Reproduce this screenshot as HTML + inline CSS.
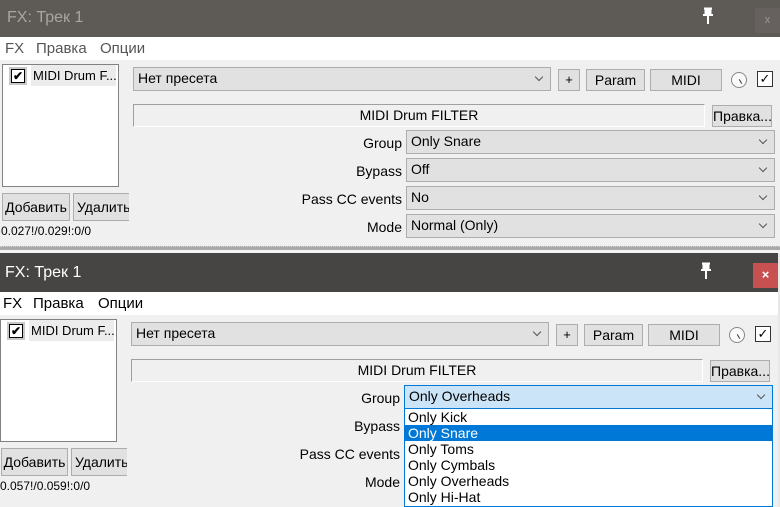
<!DOCTYPE html><html><head><meta charset="utf-8"><style>
*{box-sizing:border-box;margin:0;padding:0}
body{width:780px;height:507px;overflow:hidden;background:#f0f0f0;font-family:"Liberation Sans",sans-serif;font-size:13px;color:#000;position:relative}
.a{position:absolute;white-space:nowrap}
.btn{position:absolute;background:#e1e1e1;border:1px solid #adadad;text-align:center;line-height:20px;white-space:nowrap}
.cb{position:absolute;background:#e1e1e1;border:1px solid #adadad;padding-left:4px;line-height:21px;white-space:nowrap}
.cb:after{content:"";position:absolute;right:8px;top:6px;width:5px;height:5px;border-right:1px solid #555;border-bottom:1px solid #555;transform:rotate(45deg)}
.lbl{position:absolute;text-align:right;width:200px}
.menu{position:absolute;font-size:15px;color:#000;white-space:nowrap}
.menu span{position:absolute}
</style></head><body>
<!-- top window -->
<div class="a" style="left:0;top:0;width:780px;height:37px;background:#5e5a56"></div>
<div class="a" style="left:7px;top:9px;color:#a8a5a2;font-size:16px">FX: Трек 1</div>
<svg class="a" style="left:700px;top:7px" width="16" height="18"><path d="M4 1.5h8M5.5 1.5v6M10.5 1.5v6M3 8h10M8 8v9" stroke="#fff" stroke-width="2" fill="none"/><rect x="5" y="2" width="6" height="6" fill="#fff"/></svg>
<div class="a" style="left:755px;top:8px;width:25px;height:25px;background:#66615e;color:#9a9794;text-align:center;line-height:24px;font-size:11px">x</div>
<div class="a" style="left:0;top:37px;width:780px;height:23px;background:#fff"></div>
<div class="menu" style="left:0;top:40px;color:#555"><span style="left:5px">FX</span><span style="left:36px">Правка</span><span style="left:100px">Опции</span></div>
<div class="a" style="left:2px;top:64px;width:117px;height:123px;background:#fff;border:1px solid #828282"></div>
<div class="a" style="left:9px;top:67px;width:18px;height:18px;background:#c8c8c8"></div>
<div class="a" style="left:11px;top:69px;width:14px;height:14px;background:#fff;border:1px solid #000;font-size:12px;line-height:12px;text-align:center;font-weight:bold">✔</div>
<div class="a" style="left:31px;top:65px;width:85px;height:21px;background:#ececec;line-height:21px;padding-left:2px;overflow:hidden">MIDI Drum F...</div>
<div class="btn" style="left:2px;top:193px;width:68px;height:28px;line-height:26px;font-size:14px">Добавить</div>
<div class="btn" style="left:73px;top:193px;width:56px;height:28px;line-height:26px;overflow:hidden;text-align:left;padding-left:3px;border-right:none;font-size:14px">Удалить</div>
<div class="a" style="left:1px;top:224px;font-size:12px">0.027!/0.029!:0/0</div>
<div class="cb" style="left:133px;top:67px;width:418px;height:24px;font-size:14px">Нет пресета</div>
<div class="btn" style="left:558px;top:69px;width:22px;height:22px">+</div>
<div class="btn" style="left:586px;top:69px;width:59px;height:22px;font-size:14px">Param</div>
<div class="btn" style="left:650px;top:69px;width:72px;height:22px;font-size:14px">MIDI</div>
<div class="a" style="left:731px;top:72px;width:16px;height:16px;border-radius:50%;border:1px solid #888;background:#fafafa"></div>
<div class="a" style="left:740px;top:79px;width:1px;height:5px;background:#333;transform:rotate(-30deg)"></div>
<div class="a" style="left:757px;top:71px;width:16px;height:16px;border:1px solid #333;background:#fff;font-size:13px;line-height:14px;text-align:center">✓</div>
<div class="a" style="left:133px;top:104px;width:572px;height:23px;border:1px solid #a0a0a0;border-right-color:#fff;border-bottom-color:#fff;text-align:center;line-height:21px;font-size:14px">MIDI Drum FILTER</div>
<div class="btn" style="left:712px;top:105px;width:60px;height:22px;font-size:14px">Правка...</div>
<div class="lbl" style="left:202px;top:135px;font-size:14px">Group</div>
<div class="cb" style="left:406px;top:130px;width:369px;height:24px;font-size:14px">Only Snare</div>
<div class="lbl" style="left:202px;top:163px;font-size:14px">Bypass</div>
<div class="cb" style="left:406px;top:158px;width:369px;height:24px;font-size:14px">Off</div>
<div class="lbl" style="left:202px;top:191px;font-size:14px">Pass CC events</div>
<div class="cb" style="left:406px;top:186px;width:369px;height:24px;font-size:14px">No</div>
<div class="lbl" style="left:202px;top:219px;font-size:14px">Mode</div>
<div class="cb" style="left:406px;top:214px;width:369px;height:24px;font-size:14px">Normal (Only)</div>
<!-- separator -->
<div class="a" style="left:0;top:246px;width:780px;height:4px;background:#a9a9a9;border-top:1px dotted #d0d0d0"></div>
<div class="a" style="left:0;top:250px;width:780px;height:3px;background:#f4f4f4"></div>
<!-- bottom window -->
<div class="a" style="left:0;top:253px;width:780px;height:39px;background:#474544"></div>
<div class="a" style="left:5px;top:264px;color:#fff;font-size:16px">FX: Трек 1</div>
<svg class="a" style="left:698px;top:262px" width="16" height="18"><path d="M4 1.5h8M5.5 1.5v6M10.5 1.5v6M3 8h10M8 8v9" stroke="#fff" stroke-width="2" fill="none"/><rect x="5" y="2" width="6" height="6" fill="#fff"/></svg>
<div class="a" style="left:753px;top:263px;width:25px;height:25px;background:#c75050;color:#fff;text-align:center;line-height:24px;font-size:13px;font-weight:bold">×</div>
<div class="a" style="left:0;top:292px;width:778px;height:23px;background:#fff"></div>
<div class="a" style="left:778px;top:253px;width:2px;height:254px;background:#e8e8e8"></div>
<div class="menu" style="left:0;top:295px"><span style="left:3px">FX</span><span style="left:33px">Правка</span><span style="left:98px">Опции</span></div>
<div class="a" style="left:0;top:319px;width:117px;height:123px;background:#fff;border:1px solid #828282"></div>
<div class="a" style="left:7px;top:322px;width:18px;height:18px;background:#c8c8c8"></div>
<div class="a" style="left:9px;top:324px;width:14px;height:14px;background:#fff;border:1px solid #000;font-size:12px;line-height:12px;text-align:center;font-weight:bold">✔</div>
<div class="a" style="left:29px;top:320px;width:85px;height:21px;background:#ececec;line-height:21px;padding-left:2px;overflow:hidden">MIDI Drum F...</div>
<div class="btn" style="left:1px;top:448px;width:67px;height:28px;line-height:26px;font-size:14px">Добавить</div>
<div class="btn" style="left:71px;top:448px;width:56px;height:28px;line-height:26px;overflow:hidden;text-align:left;padding-left:3px;border-right:none;font-size:14px">Удалить</div>
<div class="a" style="left:0;top:479px;font-size:12px">0.057!/0.059!:0/0</div>
<div class="cb" style="left:131px;top:322px;width:418px;height:24px;font-size:14px">Нет пресета</div>
<div class="btn" style="left:556px;top:324px;width:22px;height:22px">+</div>
<div class="btn" style="left:584px;top:324px;width:59px;height:22px;font-size:14px">Param</div>
<div class="btn" style="left:648px;top:324px;width:72px;height:22px;font-size:14px">MIDI</div>
<div class="a" style="left:729px;top:327px;width:16px;height:16px;border-radius:50%;border:1px solid #888;background:#fafafa"></div>
<div class="a" style="left:738px;top:334px;width:1px;height:5px;background:#333;transform:rotate(-30deg)"></div>
<div class="a" style="left:755px;top:326px;width:16px;height:16px;border:1px solid #333;background:#fff;font-size:13px;line-height:14px;text-align:center">✓</div>
<div class="a" style="left:131px;top:359px;width:572px;height:23px;border:1px solid #a0a0a0;border-right-color:#fff;border-bottom-color:#fff;text-align:center;line-height:21px;font-size:14px">MIDI Drum FILTER</div>
<div class="btn" style="left:710px;top:360px;width:60px;height:22px;font-size:14px">Правка...</div>
<div class="lbl" style="left:200px;top:390px;font-size:14px">Group</div>
<div class="lbl" style="left:200px;top:418px;font-size:14px">Bypass</div>
<div class="lbl" style="left:200px;top:446px;font-size:14px">Pass CC events</div>
<div class="lbl" style="left:200px;top:474px;font-size:14px">Mode</div>
<div class="cb" style="left:404px;top:385px;width:369px;height:24px;background:#cce4f7;border-color:#0078d7;font-size:14px">Only Overheads</div>
<div class="a" style="left:404px;top:409px;width:369px;height:98px;background:#fff;border:1px solid #0078d7;border-top:none;line-height:16px;font-size:14px">
<div style="padding-left:3px">Only Kick</div>
<div style="padding-left:3px;background:#0078d7;color:#fff">Only Snare</div>
<div style="padding-left:3px">Only Toms</div>
<div style="padding-left:3px">Only Cymbals</div>
<div style="padding-left:3px">Only Overheads</div>
<div style="padding-left:3px">Only Hi-Hat</div>
</div>
</body></html>
